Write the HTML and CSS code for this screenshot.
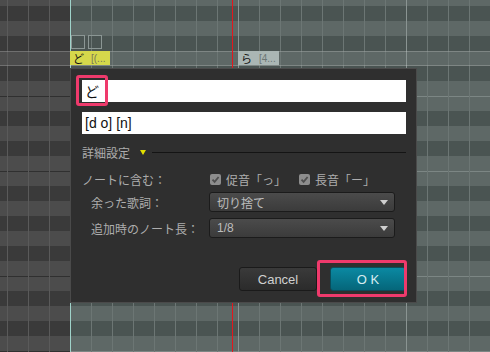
FILE: index.html
```html
<!DOCTYPE html>
<html lang="ja">
	<head>
		<meta name="viewport" content="width=device-width, initial-scale=1">
		<link rel="stylesheet" href="styles.css">
	</head>

	<body>
		<div id="roll">
			<div class="lane lane-keys"></div>
			<div class="lane lane-sel"></div>

			<div class="cur-row"></div>
			<div class="handle h1"></div>
			<div class="handle h2"></div>
			<div class="note note-cur">ど<span>[(...</span></div>
			<div class="note note-next">ら<span>[4...</span></div>
			<div class="playhead"></div>

			<div id="dialog">
				<div class="field">ど</div>
				<div class="field second">[d o] [n]</div>

				<div class="section">
					<span>詳細設定</span>
					<i class="tri"></i>
					<b class="rule"></b>
				</div>

				<div class="settings">
					<div class="label">ノートに含む：</div>
					<div class="checks">
						<label><i class="box"><svg width="11" height="11" viewBox="0 0 11 11"><path d="M2.5 5.6 L4.6 7.8 L8.6 3" fill="none" stroke="#4e4e4e" stroke-width="1.8"/></svg></i>促音「っ」</label>
						<label><i class="box"><svg width="11" height="11" viewBox="0 0 11 11"><path d="M2.5 5.6 L4.6 7.8 L8.6 3" fill="none" stroke="#4e4e4e" stroke-width="1.8"/></svg></i>長音「ー」</label>
					</div>

					<div class="label sub">余った歌詞：</div>
					<div class="select">切り捨て<i class="arrow"></i></div>

					<div class="label sub">追加時のノート長：</div>
					<div class="select">1/8<i class="arrow"></i></div>
				</div>

				<div class="buttons">
					<div class="btn cancel">Cancel</div>
					<div class="btn ok">O K</div>
				</div>
			</div>

			<!-- callouts -->
			<div class="mark m1"></div>
			<div class="mark m2"></div>
		</div>
	</body>

</html>
```

FILE: styles.css
```css
* {
	box-sizing: border-box;
}
html {
	font-family: "Liberation Sans", "Noto Sans CJK JP", sans-serif;
	background: #3a3a3a;
}
body {
	margin: 0;
}
#roll {
	position: relative;
	width: 490px;
	height: 352px;
	overflow: hidden;
	display: flex;
}
.lane {
	height: 100%;
}
.lane-keys {
	width: 70px;
	background:
		linear-gradient(to right, #5a5a5a 1px, transparent 1px) 7px 0 / 21px 100% repeat-x,
		linear-gradient(to bottom,
			#3a3a3a 0 15px, #4c4c4c 15px 30px, #3a3a3a 30px 45px, #4c4c4c 45px 60px,
			#3a3a3a 60px 75px, #4c4c4c 75px 90px, #303030 90px 91px, #4c4c4c 91px 105px,
			#3a3a3a 105px 120px, #4c4c4c 120px 135px, #3a3a3a 135px 150px, #4c4c4c 150px 165px,
			#303030 165px 166px, #4c4c4c 166px 180px) 0 6px / 100% 180px repeat-y;
}
.lane-sel {
	flex: 1;
	background:
		linear-gradient(to right, #9fd3ca 1px, transparent 1px) 0 0 / 100% 100% no-repeat,
		linear-gradient(to right, #8a9492 1px, transparent 1px) 168px 0 / 168px 100% repeat-x,
		linear-gradient(to right, #6c7674 1px, transparent 1px) 0 0 / 21px 100% repeat-x,
		linear-gradient(to bottom,
			#4a5452 0 15px, #5e6866 15px 30px, #4a5452 30px 45px, #5e6866 45px 60px,
			#4a5452 60px 75px, #5e6866 75px 90px, #7c8684 90px 91px, #5e6866 91px 105px,
			#4a5452 105px 120px, #5e6866 120px 135px, #4a5452 135px 150px, #5e6866 150px 165px,
			#7c8684 165px 166px, #5e6866 166px 180px) 0 6px / 100% 180px repeat-y;
}

/* canvas items */
.cur-row {
	position: absolute;
	left: 0;
	top: 51px;
	width: 100%;
	height: 15px;
	border-top: 1px solid rgba(255, 255, 255, 0.2);
	border-bottom: 1px solid rgba(255, 255, 255, 0.2);
}
.handle {
	position: absolute;
	top: 35px;
	width: 14px;
	height: 14px;
	border: 1px solid #8b9694;
}
.h1 {
	left: 71px;
}
.h2 {
	left: 88px;
}
.note {
	position: absolute;
	top: 51px;
	height: 14px;
	display: flex;
	align-items: center;
	gap: 7px;
	padding-left: 3px;
	font-size: 11px;
	color: #111;
	white-space: nowrap;
	overflow: hidden;
}
.note span {
	color: #77775a;
	font-size: 10px;
}
.note-cur {
	left: 70px;
	width: 40px;
	background: #d5d84b;
}
.note-next {
	left: 238px;
	width: 41px;
	background: #aab6b4;
}
.note-next span {
	color: #6c7674;
}
.playhead {
	position: absolute;
	left: 232px;
	top: 0;
	width: 1px;
	height: 100%;
	background: #e3161c;
}

/* dialog */
#dialog {
	position: absolute;
	left: 70px;
	top: 68px;
	width: 347px;
	height: 235px;
	border: 1px solid #4a4a4a;
	background: #2f2f2f;
	padding: 11px 10px 11px 11px;
	display: flex;
	flex-direction: column;
	color: #adadad;
	font-size: 12px;
}
.field {
	height: 22px;
	background: #fff;
	color: #111;
	font-size: 14px;
	padding-left: 3px;
	display: flex;
	align-items: center;
}
.field.second {
	margin-top: 10px;
}
.section {
	margin-top: 11px;
	height: 14px;
	display: flex;
	align-items: center;
}
.tri {
	margin-left: 10px;
	width: 0;
	height: 0;
	border-left: 3.5px solid transparent;
	border-right: 3.5px solid transparent;
	border-top: 5px solid #e2df00;
}
.rule {
	flex: 1;
	margin-left: 6px;
	height: 1px;
	background: #141414;
}
.settings {
	margin-top: 13px;
	display: grid;
	grid-template-columns: 127px 186px;
	grid-template-rows: 14px 20px 20px;
	row-gap: 6px;
	align-items: center;
}
.label {
	white-space: nowrap;
}
.label.sub {
	padding-left: 9px;
}
.checks {
	display: flex;
	gap: 13px;
	padding-left: 1px;
}
.checks label {
	display: flex;
	align-items: center;
	gap: 5px;
}
.box {
	width: 11px;
	height: 11px;
	border-radius: 2px;
	background: #8d8d8d;
	display: flex;
}
.select {
	height: 20px;
	border: 1px solid #1b1b1b;
	border-radius: 3px;
	background: linear-gradient(#4b4b4b, #3b3b3b);
	color: #bdbdbd;
	padding: 0 6px 0 7px;
	display: flex;
	align-items: center;
	justify-content: space-between;
}
.arrow {
	width: 0;
	height: 0;
	border-left: 4px solid transparent;
	border-right: 4px solid transparent;
	border-top: 5px solid #cfcfcf;
}
.buttons {
	margin-top: auto;
	display: flex;
	justify-content: flex-end;
	gap: 13px;
}
.btn {
	height: 24px;
	border-radius: 3px;
	display: flex;
	align-items: center;
	justify-content: center;
	font-size: 13px;
}
.cancel {
	width: 78px;
	border: 1px solid #1a1a1a;
	background: linear-gradient(#3a3a3a, #2b2b2b);
	color: #d0d0d0;
}
.ok {
	width: 76px;
	border: 1px solid #0a4c5a;
	background: linear-gradient(#0b89a2, #05667a);
	color: #d6ecf0;
}

/* callouts */
.mark {
	position: absolute;
	border: 3px solid #ef3a6c;
	border-radius: 3px;
}
.m1 {
	left: 76px;
	top: 75px;
	width: 32px;
	height: 31px;
}
.m2 {
	left: 317px;
	top: 260px;
	width: 90px;
	height: 37px;
}
```
